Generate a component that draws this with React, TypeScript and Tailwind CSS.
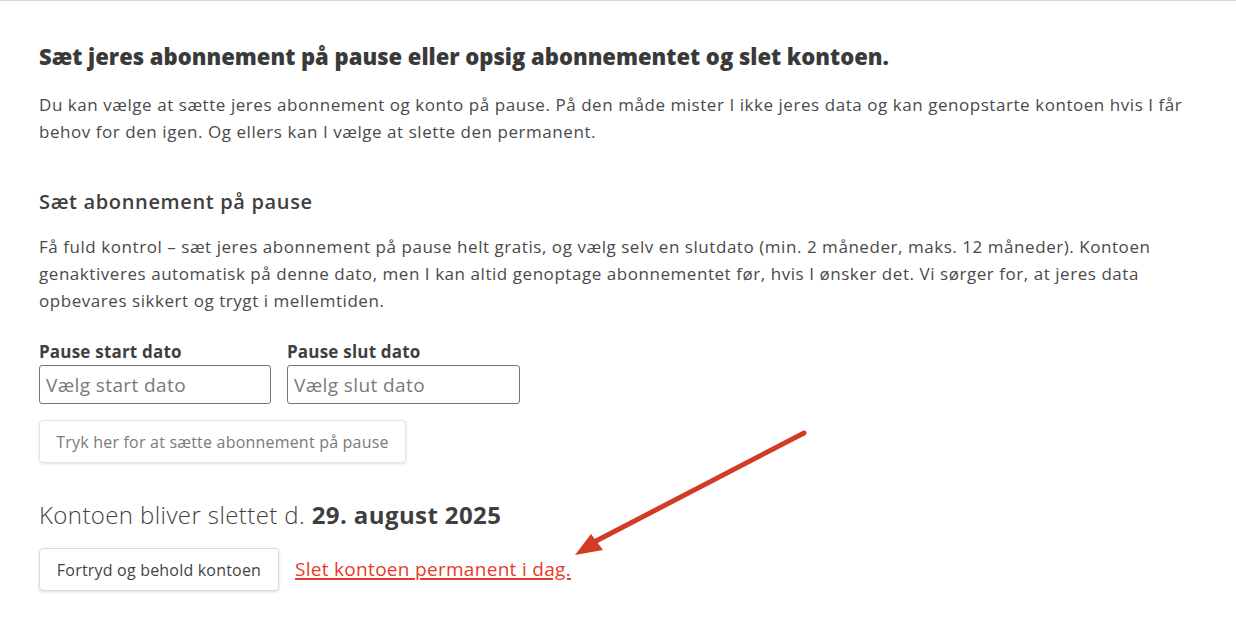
import React from "react";

const font = { fontFamily: "'Open Sans', Arial, sans-serif" };

export default function App() {
  return (
    <div className="relative min-h-screen bg-white border-t border-[#d6d6d6] text-[#4a4a4a]" style={font}>
      <div className="px-[39px]">
        <h1 className="mt-[40px] text-[22px] leading-[30px] font-extrabold text-[#3a3a3a]">
          Sæt jeres abonnement på pause eller opsig abonnementet og slet kontoen.
        </h1>
        <p className="mt-[20px] text-[17px] leading-[27px] tracking-[0.55px]">
          Du kan vælge at sætte jeres abonnement og konto på pause. På den måde mister I ikke jeres data og kan genopstarte kontoen hvis I får behov for den igen. Og ellers kan I vælge at slette den permanent.
        </p>

        <h2 className="mt-[44px] text-[20px] leading-[26px] font-semibold tracking-[0.65px] text-[#3f3f3f]">Sæt abonnement på pause</h2>
        <p className="mt-[18px] text-[17px] leading-[27px] tracking-[0.55px]">
          Få fuld kontrol – sæt jeres abonnement på pause helt gratis, og vælg selv en slutdato (min. 2 måneder, maks. 12 måneder). Kontoen genaktiveres automatisk på denne dato, men I kan altid genoptage abonnementet før, hvis I ønsker det. Vi sørger for, at jeres data opbevares sikkert og trygt i mellemtiden.
        </p>

        <div className="mt-[28px] flex gap-4">
          <div className="flex flex-col">
            <label className="text-[17px] leading-[20px] font-bold tracking-[0.2px] text-[#3f3f3f]">Pause start dato</label>
            <input
              placeholder="Vælg start dato"
              className="mt-[3px] w-[232px] h-[39px] rounded-[3px] border border-[#767676] px-[6px] text-[19px] tracking-[0.4px] placeholder:text-[#7a7a7a] outline-none"
              style={font}
            />
          </div>
          <div className="flex flex-col">
            <label className="text-[17px] leading-[20px] font-bold tracking-[0.2px] text-[#3f3f3f]">Pause slut dato</label>
            <input
              placeholder="Vælg slut dato"
              className="mt-[3px] w-[233px] h-[39px] rounded-[3px] border border-[#767676] px-[6px] text-[19px] tracking-[0.4px] placeholder:text-[#7a7a7a] outline-none"
              style={font}
            />
          </div>
        </div>

        <button
          className="mt-[16px] h-[43px] w-[367px] rounded-[4px] border border-[#e3e3e3] bg-white text-[16px] tracking-[0.2px] text-[#7a7a7a] shadow-[0_1px_3px_rgba(0,0,0,0.12)]"
          style={font}
        >
          Tryk her for at sætte abonnement på pause
        </button>

        <p className="mt-[36px] text-[24px] leading-[32px] font-light tracking-[0.4px] text-[#3f3f3f]">
          Kontoen bliver slettet d. <span className="font-bold">29. august 2025</span>
        </p>

        <div className="mt-[17px] flex items-center gap-4">
          <button
            className="h-[43px] w-[240px] rounded-[4px] border border-[#dcdcdc] bg-white text-[16px] tracking-[0.2px] text-[#444] shadow-[0_1px_3px_rgba(0,0,0,0.15)]"
            style={font}
          >
            Fortryd og behold kontoen
          </button>
          <a
            href="#"
            className="text-[19px] tracking-[0.3px] text-[#e8392a] underline decoration-[1.5px] underline-offset-[2px]"
          >
            Slet kontoen permanent i dag.
          </a>
        </div>
      </div>

      <svg className="absolute left-0 top-0 pointer-events-none" width="1236" height="624">
        <line x1="804" y1="432" x2="596" y2="540" stroke="#d13c25" strokeWidth="5" strokeLinecap="round" />
        <polygon points="575,554 591,533 603,549" fill="#d13c25" />
      </svg>
    </div>
  );
}
